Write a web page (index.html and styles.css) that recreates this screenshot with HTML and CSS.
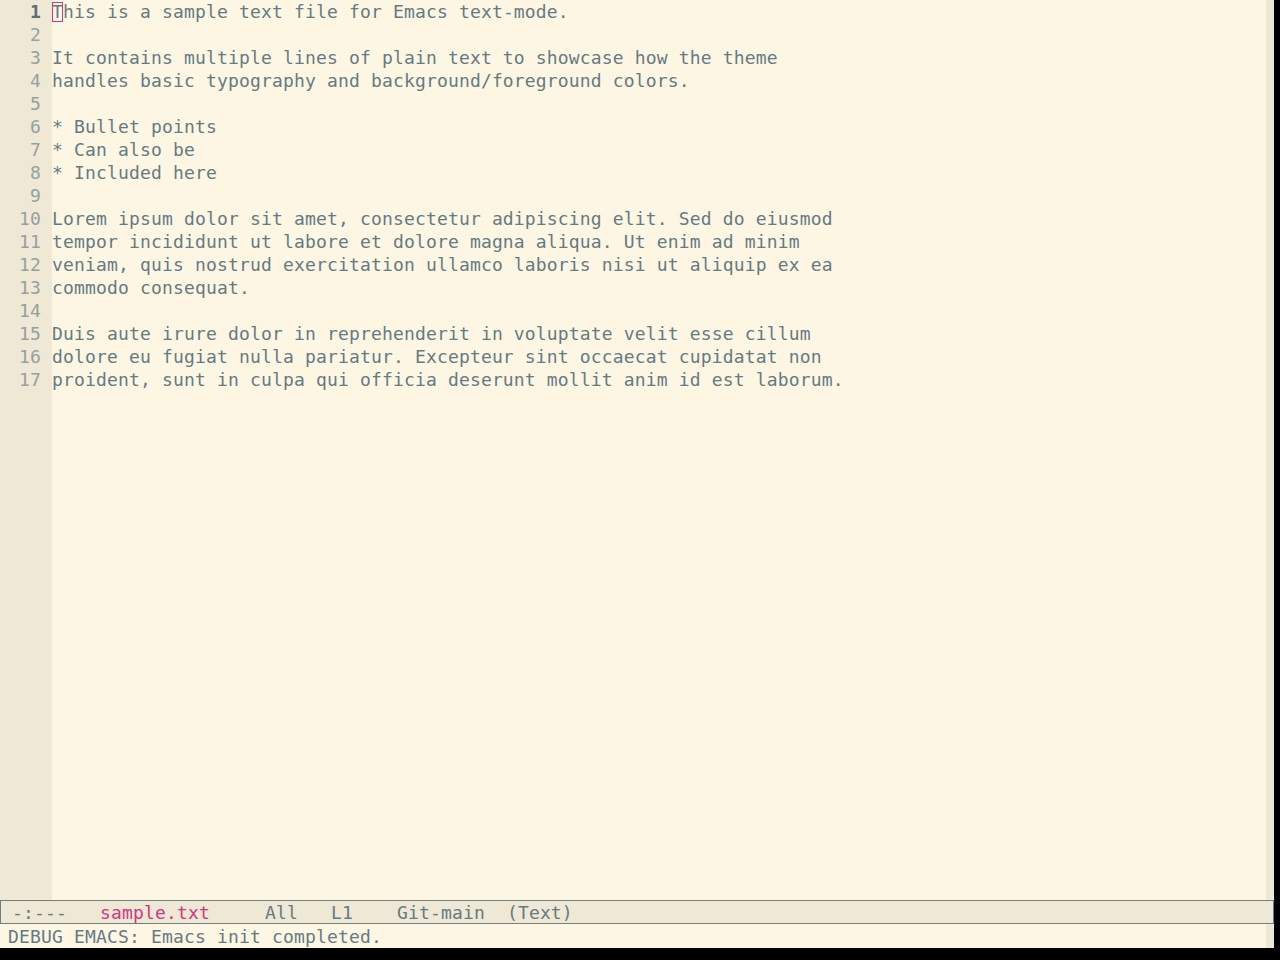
FILE: index.html
```html
<!DOCTYPE html>
<html>
<head>
<meta charset="utf-8">
<link rel="stylesheet" href="styles.css">
</head>
<body>
<div class="frame">
  <div class="window">
    <div class="gutter">
      <div class="ln cur">1</div>
      <div class="ln">2</div>
      <div class="ln">3</div>
      <div class="ln">4</div>
      <div class="ln">5</div>
      <div class="ln">6</div>
      <div class="ln">7</div>
      <div class="ln">8</div>
      <div class="ln">9</div>
      <div class="ln">10</div>
      <div class="ln">11</div>
      <div class="ln">12</div>
      <div class="ln">13</div>
      <div class="ln">14</div>
      <div class="ln">15</div>
      <div class="ln">16</div>
      <div class="ln">17</div>
    </div>
    <div class="text">
      <div class="line"><span class="cursor">T</span>his is a sample text file for Emacs text-mode.</div>
      <div class="line"> </div>
      <div class="line">It contains multiple lines of plain text to showcase how the theme</div>
      <div class="line">handles basic typography and background/foreground colors.</div>
      <div class="line"> </div>
      <div class="line">* Bullet points</div>
      <div class="line">* Can also be</div>
      <div class="line">* Included here</div>
      <div class="line"> </div>
      <div class="line">Lorem ipsum dolor sit amet, consectetur adipiscing elit. Sed do eiusmod</div>
      <div class="line">tempor incididunt ut labore et dolore magna aliqua. Ut enim ad minim</div>
      <div class="line">veniam, quis nostrud exercitation ullamco laboris nisi ut aliquip ex ea</div>
      <div class="line">commodo consequat.</div>
      <div class="line"> </div>
      <div class="line">Duis aute irure dolor in reprehenderit in voluptate velit esse cillum</div>
      <div class="line">dolore eu fugiat nulla pariatur. Excepteur sint occaecat cupidatat non</div>
      <div class="line">proident, sunt in culpa qui officia deserunt mollit anim id est laborum.</div>
    </div>
    <div class="fringe"></div>
  </div>
  <div class="modeline">-:---   <span class="bufname">sample.txt</span>     All   L1    Git-main  (Text)</div>
  <div class="echo"><div class="echo-text">DEBUG EMACS: Emacs init completed.</div><div class="fringe"></div></div>
</div>
</body>
</html>
```

FILE: styles.css
```css
html, body {
  margin: 0;
  padding: 0;
  background: #000;
}
body {
  font-family: "DejaVu Sans Mono", monospace;
  font-size: 18px;
  letter-spacing: 0.16px;
  color: #657b83;
}
.frame {
  width: 1274px;
  height: 948px;
  display: flex;
  flex-direction: column;
}
.window {
  height: 900px;
  display: flex;
  background: #fdf6e3;
}
.gutter {
  width: 52px;
  box-sizing: border-box;
  padding-right: 11px;
  background: #eee8d5;
  text-align: right;
  color: #93a1a1;
}
.ln, .line {
  height: 23px;
  line-height: 23px;
  white-space: pre;
}
.ln.cur {
  color: #586e75;
  font-weight: bold;
}
.text {
  flex: 1;
}
.fringe {
  width: 8px;
  background: #eee8d5;
}
.cursor {
  display: inline-block;
  height: 23px;
  vertical-align: top;
  position: relative;
}
.cursor::after {
  content: "";
  position: absolute;
  left: 0;
  right: 0;
  top: 2px;
  bottom: 1px;
  border: 1px solid #d33682;
}
.modeline {
  height: 24px;
  box-sizing: border-box;
  border: 1px solid #6c7f84;
  background: #eee8d5;
  line-height: 24px;
  padding-left: 11px;
  white-space: pre;
  color: #657b83;
}
.bufname {
  color: #d33682;
}
.echo {
  height: 24px;
  display: flex;
  background: #fdf6e3;
}
.echo-text {
  flex: 1;
  line-height: 26px;
  padding-left: 8px;
  white-space: pre;
}
```
